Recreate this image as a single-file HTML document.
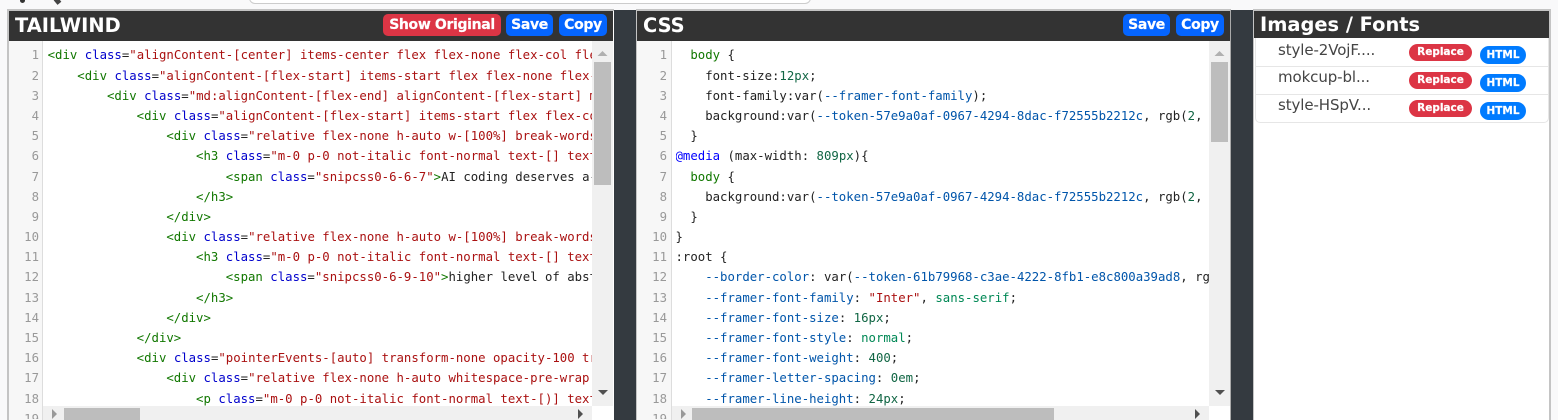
<!DOCTYPE html>
<html><head><meta charset="utf-8"><style>
html,body{margin:0;padding:0;width:1558px;height:420px;overflow:hidden;background:#f9f9fa;}
div{position:absolute;box-sizing:border-box;}
.hd{background:#333;color:#fff;font:bold 19.4px "DejaVu Sans",sans-serif;line-height:28px;white-space:nowrap;padding-left:6px;}
.btn{color:#fff;font:bold 14px "DejaVu Sans",sans-serif;border-radius:5px;text-align:center;height:22px;line-height:23px;top:14px;white-space:nowrap;letter-spacing:-.35px;-webkit-text-stroke:.2px #fff;}
.code{font:12.33px/20.18px "DejaVu Sans Mono",monospace;white-space:pre;color:#222;overflow:hidden;}
.nums{font:12.33px/20.18px "DejaVu Sans Mono",monospace;color:#999;text-align:right;white-space:pre;}
.t{color:#170}.a{color:#00c}.s{color:#a11}.v{color:#05a}.n{color:#164}.d{color:#00f}.k{color:#085}.q{color:#30a}
.row{left:1278px;font:15px "DejaVu Sans",sans-serif;color:#444;letter-spacing:-.1px;white-space:nowrap;}
.pill{color:#fff;font:bold 10.5px "DejaVu Sans",sans-serif;text-align:center;border-radius:9px;white-space:nowrap;-webkit-text-stroke:.2px #fff;}
.line{background:#e6e6e6;height:1px;left:1255px;width:293px;}
.thumb{background:#bdbdbd;}
.track{background:#f0f0f0;}
svg{position:absolute;}
</style></head><body>
<div style="left:249px;top:-20px;width:562px;height:24px;border:1px solid #ccc;border-radius:6px;background:#fff"></div>
<div style="left:20px;top:-3px;width:5px;height:6px;background:#333;border-radius:3px"></div>
<div style="left:55px;top:-2px;width:5px;height:6px;background:#444;transform:rotate(-40deg)"></div>

<!-- dark gutters -->
<div style="left:613px;top:10px;width:23px;height:410px;background:#343a40"></div>
<div style="left:1231px;top:10px;width:22px;height:410px;background:#343a40"></div>

<!-- panel 1 -->
<div style="left:7px;top:9px;width:607px;height:411px;background:#fff;border-left:2px solid #c4c4c4;border-top:2px solid #c4c4c4"></div>
<div class="hd" style="left:9px;top:11px;width:604px;height:30px;line-height:29px">TAILWIND</div>
<div class="btn" style="left:383px;width:118px;background:#dc3545">Show Original</div>
<div class="btn" style="left:506px;width:47px;background:#0565ff">Save</div>
<div class="btn" style="left:559px;width:48px;background:#0565ff">Copy</div>
<div style="left:9px;top:41px;width:34px;height:379px;background:#f7f7f7;border-right:1px solid #ddd"></div>
<div class="nums" style="left:9px;top:45.4px;width:30px;height:374px;overflow:hidden">1
2
3
4
5
6
7
8
9
10
11
12
13
14
15
16
17
18
19</div>
<div class="code" style="left:47.6px;top:45.4px;width:544.6px;height:360.6px"><span class="t">&lt;div</span> <span class="a">class</span>=<span class="s">"alignContent-[center] items-center flex flex-none flex-col flex-nowrap"</span>
    <span class="t">&lt;div</span> <span class="a">class</span>=<span class="s">"alignContent-[flex-start] items-start flex flex-none flex-col"</span>
        <span class="t">&lt;div</span> <span class="a">class</span>=<span class="s">"md:alignContent-[flex-end] alignContent-[flex-start] md:items"</span>
            <span class="t">&lt;div</span> <span class="a">class</span>=<span class="s">"alignContent-[flex-start] items-start flex flex-col"</span>
                <span class="t">&lt;div</span> <span class="a">class</span>=<span class="s">"relative flex-none h-auto w-[100%] break-words"</span>
                    <span class="t">&lt;h3</span> <span class="a">class</span>=<span class="s">"m-0 p-0 not-italic font-normal text-[] text-left"</span>
                        <span class="t">&lt;span</span> <span class="a">class</span>=<span class="s">"snipcss0-6-6-7"</span><span class="t">&gt;</span>AI coding deserves a-new
                    <span class="t">&lt;/h3&gt;</span>
                <span class="t">&lt;/div&gt;</span>
                <span class="t">&lt;div</span> <span class="a">class</span>=<span class="s">"relative flex-none h-auto w-[100%] break-words"</span>
                    <span class="t">&lt;h3</span> <span class="a">class</span>=<span class="s">"m-0 p-0 not-italic font-normal text-[] text-left"</span>
                        <span class="t">&lt;span</span> <span class="a">class</span>=<span class="s">"snipcss0-6-9-10"</span><span class="t">&gt;</span>higher level of abstraction
                    <span class="t">&lt;/h3&gt;</span>
                <span class="t">&lt;/div&gt;</span>
            <span class="t">&lt;/div&gt;</span>
            <span class="t">&lt;div</span> <span class="a">class</span>=<span class="s">"pointerEvents-[auto] transform-none opacity-100 transition"</span>
                <span class="t">&lt;div</span> <span class="a">class</span>=<span class="s">"relative flex-none h-auto whitespace-pre-wrap w-full"</span>
                    <span class="t">&lt;p</span> <span class="a">class</span>=<span class="s">"m-0 p-0 not-italic font-normal text-[)] text-left"</span></div>
<div class="track" style="left:592px;top:41px;width:21px;height:365px"></div>
<div class="thumb" style="left:594px;top:62px;width:17px;height:123px"></div>
<svg style="left:592px;top:41px" width="21" height="365"><path d="M5.5 15L10.5 10L15.5 15Z" fill="#b0b0b0"/><path d="M6 349H16L11 354Z" fill="#505050"/></svg>
<div class="track" style="left:43px;top:406px;width:549px;height:14px"></div>
<div class="thumb" style="left:64px;top:408px;width:76px;height:12px"></div>
<svg style="left:43px;top:406px" width="549" height="14"><path d="M14 7L9 12V2Z" fill="#999" transform="translate(0,1)"/><path d="M535 3V13L540 8Z" fill="#505050"/></svg>
<div style="left:592px;top:406px;width:21px;height:14px;background:#fff"></div>

<!-- panel 2 -->
<div style="left:636px;top:9px;width:595px;height:411px;background:#fff;border-left:1px solid #c4c4c4;border-top:2px solid #c4c4c4;border-right:1px solid #aaa"></div>
<div class="hd" style="left:637px;top:11px;width:593px;height:30px;line-height:29px">CSS</div>
<div class="btn" style="left:1123px;width:47px;background:#0565ff">Save</div>
<div class="btn" style="left:1176px;width:48px;background:#0565ff">Copy</div>
<div style="left:637px;top:41px;width:35px;height:379px;background:#f7f7f7;border-right:1px solid #ddd"></div>
<div class="nums" style="left:637px;top:45.4px;width:30px;height:374px;overflow:hidden">1
2
3
4
5
6
7
8
9
10
11
12
13
14
15
16
17
18
19</div>
<div class="code" style="left:675.5px;top:45.4px;width:533.5px;height:360.6px">  <span class="t">body</span> {
    font-size:<span class="n">12px</span>;
    font-family:var(<span class="v">--framer-font-family</span>);
    background:var(<span class="v">--token-57e9a0af-0967-4294-8dac-f72555b2212c</span>, rgb(<span class="n">2</span>, <span class="n">2</span>, <span class="n">2</span>));
  }
<span class="d">@media</span> (max-width: <span class="n">809px</span>){
  <span class="t">body</span> {
    background:var(<span class="v">--token-57e9a0af-0967-4294-8dac-f72555b2212c</span>, rgb(<span class="n">2</span>, <span class="n">2</span>, <span class="n">2</span>));
  }
}
:root {
    <span class="v">--border-color</span>: var(<span class="v">--token-61b79968-c3ae-4222-8fb1-e8c800a39ad8</span>, rgb(<span class="n">2</span>));
    <span class="v">--framer-font-family</span>: <span class="s">"Inter"</span>, <span class="k">sans-serif</span>;
    <span class="v">--framer-font-size</span>: <span class="n">16px</span>;
    <span class="v">--framer-font-style</span>: <span class="k">normal</span>;
    <span class="v">--framer-font-weight</span>: <span class="n">400</span>;
    <span class="v">--framer-letter-spacing</span>: <span class="n">0em</span>;
    <span class="v">--framer-line-height</span>: <span class="n">24px</span>;</div>
<div class="track" style="left:1209px;top:41px;width:21px;height:365px"></div>
<div class="thumb" style="left:1211px;top:62px;width:17px;height:80px"></div>
<svg style="left:1209px;top:41px" width="21" height="365"><path d="M5.5 15L10.5 10L15.5 15Z" fill="#b0b0b0"/><path d="M6 349H16L11 354Z" fill="#505050"/></svg>
<div class="track" style="left:672px;top:406px;width:537px;height:14px"></div>
<div class="thumb" style="left:692px;top:408px;width:362px;height:12px"></div>
<svg style="left:672px;top:406px" width="537" height="14"><path d="M14 8L9 13V3Z" fill="#999"/><path d="M523 3V13L528 8Z" fill="#505050"/></svg>
<div style="left:1209px;top:406px;width:21px;height:14px;background:#fff"></div>

<!-- panel 3 -->
<div style="left:1253px;top:9px;width:298px;height:411px;background:#fff;border-left:1px solid #c4c4c4;border-top:2px solid #c4c4c4;border-right:2px solid #c4c4c4"></div>
<div class="hd" style="left:1254px;top:11px;width:295px;height:27px;line-height:28px;padding-left:6px;">Images / Fonts</div>
<div style="left:1255px;top:38px;width:294px;height:85px;border:1px solid #e6e6e6;border-top:none;border-radius:0 0 5px 5px"></div>
<div class="line" style="top:66px"></div>
<div class="line" style="top:94px"></div>
<div class="row" style="top:41px">style-2VojF....</div>
<div class="row" style="top:68px">mokcup-bl...</div>
<div class="row" style="top:96px">style-HSpV...</div>
<div class="pill" style="left:1409px;top:44px;width:63px;height:17px;line-height:16px;background:#dc3545">Replace</div>
<div class="pill" style="left:1480px;top:46px;width:46px;height:18px;line-height:18px;background:#007bff">HTML</div>
<div class="pill" style="left:1409px;top:72px;width:63px;height:17px;line-height:16px;background:#dc3545">Replace</div>
<div class="pill" style="left:1480px;top:74px;width:46px;height:18px;line-height:18px;background:#007bff">HTML</div>
<div class="pill" style="left:1409px;top:100px;width:63px;height:17px;line-height:16px;background:#dc3545">Replace</div>
<div class="pill" style="left:1480px;top:102px;width:46px;height:18px;line-height:18px;background:#007bff">HTML</div>
</body></html>
